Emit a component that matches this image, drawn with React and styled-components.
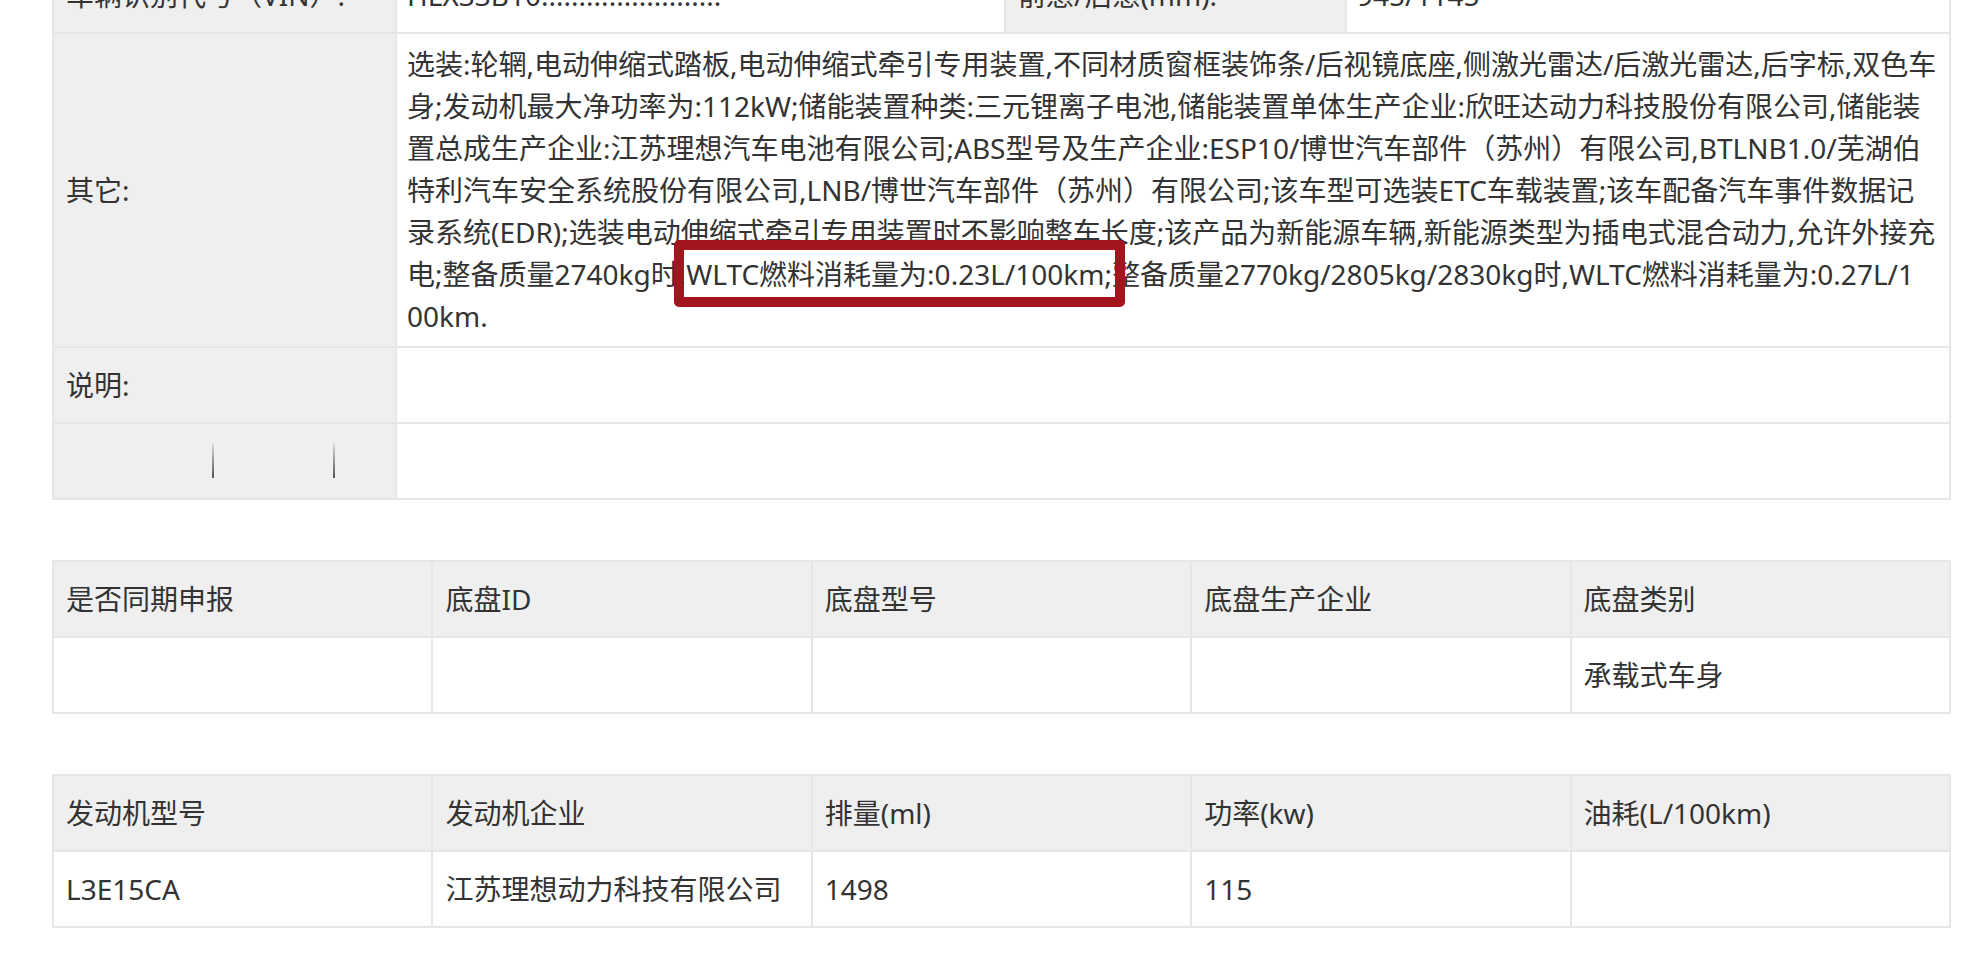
import React from "react";
import styled, { createGlobalStyle } from "styled-components";

const GlobalStyle = createGlobalStyle`
  html, body {
    margin: 0;
    padding: 0;
    background: #ffffff;
  }
  body {
    font-family: "Noto Sans", "Noto Sans CJK SC", sans-serif;
    color: #333333;
    overflow: hidden;
  }
`;

const Page = styled.div`
  padding: 0 24px 40px 52px;
  display: flex;
  flex-direction: column;
  gap: 60px;
`;

const Table = styled.table`
  width: 100%;
  border-collapse: collapse;
  table-layout: fixed;
  font-size: 28px;
  line-height: 42px;
  border: 2px solid #e6e6e6;
  margin-top: ${(p) => (p.$offset ? `${p.$offset}px` : "0")};
`;

const Cell = styled.td`
  box-sizing: border-box;
  height: 76px;
  padding: 9px 12px 9px ${(p) => (p.$label ? "12px" : "10px")};
  border: 2px solid #e6e6e6;
  background: ${(p) => (p.$shade ? "#efefef" : "#ffffff")};
  vertical-align: middle;
  text-align: left;
  font-weight: 400;
  color: #333333;
  white-space: nowrap;
  overflow: hidden;
`;

const HeadCell = styled(Cell).attrs({ as: "th" })`
  padding-left: 12px;
`;

const Line = styled.span`
  display: block;
  white-space: nowrap;
`;

const Marked = styled.span`
  position: relative;
  &::after {
    content: "";
    position: absolute;
    left: -12px;
    right: -21px;
    top: -15px;
    bottom: -14px;
    border: 10px solid #a3141f;
    border-radius: 5px;
    pointer-events: none;
  }
`;

const Ghost = styled.div`
  display: flex;
  align-items: center;
  height: 42px;
  padding-left: 146px;
  gap: 119px;
`;

const GhostBar = styled.span`
  display: block;
  width: 2px;
  height: 34px;
  background: linear-gradient(#d8d8d8, #555555);
`;

const otherLines = [
  "选装:轮辋,电动伸缩式踏板,电动伸缩式牵引专用装置,不同材质窗框装饰条/后视镜底座,侧激光雷达/后激光雷达,后字标,双色车",
  "身;发动机最大净功率为:112kW;储能装置种类:三元锂离子电池,储能装置单体生产企业:欣旺达动力科技股份有限公司,储能装",
  "置总成生产企业:江苏理想汽车电池有限公司;ABS型号及生产企业:ESP10/博世汽车部件（苏州）有限公司,BTLNB1.0/芜湖伯",
  "特利汽车安全系统股份有限公司,LNB/博世汽车部件（苏州）有限公司;该车型可选装ETC车载装置;该车配备汽车事件数据记",
  "录系统(EDR);选装电动伸缩式牵引专用装置时不影响整车长度;该产品为新能源车辆,新能源类型为插电式混合动力,允许外接充",
];

const chassisHead = ["是否同期申报", "底盘ID", "底盘型号", "底盘生产企业", "底盘类别"];
const chassisRow = ["", "", "", "", "承载式车身"];
const engineHead = ["发动机型号", "发动机企业", "排量(ml)", "功率(kw)", "油耗(L/100km)"];
const engineRow = ["L3E15CA", "江苏理想动力科技有限公司", "1498", "115", ""];

function GridTable({ head, row }) {
  return (
    <Table>
      <colgroup>
        {head.map((_, i) => (
          <col key={i} style={{ width: "20%" }} />
        ))}
      </colgroup>
      <tbody>
        <tr>
          {head.map((h) => (
            <HeadCell key={h} $shade>
              {h}
            </HeadCell>
          ))}
        </tr>
        <tr>
          {row.map((v, i) => (
            <Cell key={i} $label>
              {v}
            </Cell>
          ))}
        </tr>
      </tbody>
    </Table>
  );
}

export default function App() {
  return (
    <>
      <GlobalStyle />
      <Page>
        <Table $offset={-44}>
          <colgroup>
            <col style={{ width: "343px" }} />
            <col style={{ width: "609px" }} />
            <col style={{ width: "341px" }} />
            <col />
          </colgroup>
          <tbody>
            <tr>
              <HeadCell $shade>车辆识别代号（VIN）:</HeadCell>
              <Cell>HLX33B10........................</Cell>
              <HeadCell $shade>前悬/后悬(mm):</HeadCell>
              <Cell>945/1145</Cell>
            </tr>
            <tr>
              <HeadCell $shade>其它:</HeadCell>
              <Cell colSpan={3}>
                {otherLines.map((l) => (
                  <Line key={l}>{l}</Line>
                ))}
                <Line>
                  电;整备质量2740kg时,
                  <Marked>WLTC燃料消耗量为:0.23L/100km</Marked>
                  ;整备质量2770kg/2805kg/2830kg时,WLTC燃料消耗量为:0.27L/1
                </Line>
                <Line>00km.</Line>
              </Cell>
            </tr>
            <tr>
              <HeadCell $shade>说明:</HeadCell>
              <Cell colSpan={3} />
            </tr>
            <tr>
              <HeadCell $shade>
                <Ghost>
                  <GhostBar />
                  <GhostBar />
                </Ghost>
              </HeadCell>
              <Cell colSpan={3} />
            </tr>
          </tbody>
        </Table>
        <GridTable head={chassisHead} row={chassisRow} />
        <GridTable head={engineHead} row={engineRow} />
      </Page>
    </>
  );
}
